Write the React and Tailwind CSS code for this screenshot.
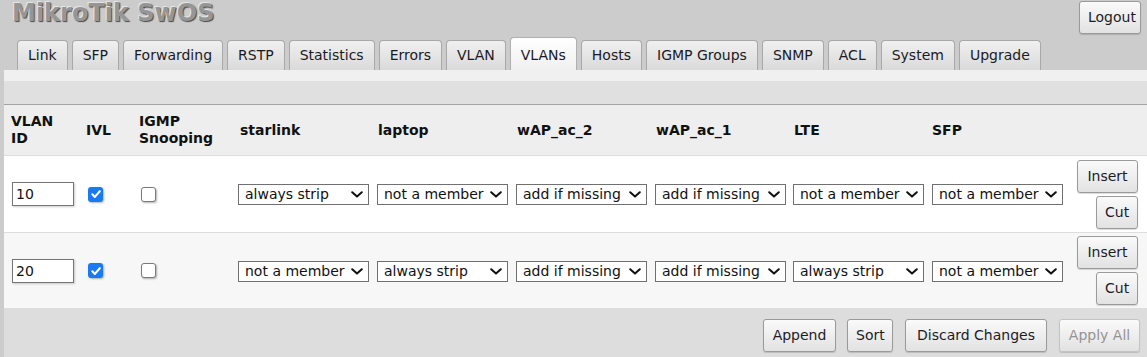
import React from "react";

const ports = ["starlink", "laptop", "wAP_ac_2", "wAP_ac_1", "LTE", "SFP"];
const rows = [
  { id: "10", ivl: true, igmp: false, vals: ["always strip", "not a member", "add if missing", "add if missing", "not a member", "not a member"], bg: "bg-white", border: "border-b border-[#dddddd]", h: "h-[77px]" },
  { id: "20", ivl: true, igmp: false, vals: ["not a member", "always strip", "add if missing", "add if missing", "always strip", "not a member"], bg: "bg-[#f7f7f7]", border: "", h: "h-[75px]" },
];
const tabs = ["Link", "SFP", "Forwarding", "RSTP", "Statistics", "Errors", "VLAN", "VLANs", "Hosts", "IGMP Groups", "SNMP", "ACL", "System", "Upgrade"];
const grid = "grid grid-cols-[75px_53px_101px_139px_139px_139px_138px_139px_139px_1fr]";

function Btn({ children, disabled, className = "" }) {
  return (
    <button
      className={`h-[33px] px-[8px] rounded-[3px] border text-[14px] bg-gradient-to-b from-[#fafafa] to-[#e2e2e2] shadow-[0_1px_1px_rgba(0,0,0,0.15)] ${disabled ? "border-[#c4c4c4] text-[#949494]" : "border-[#9a9a9a] text-[#1c1c28]"} ${className}`}
    >
      {children}
    </button>
  );
}

function Check({ on }) {
  return on ? (
    <div className="w-[15px] h-[15px] rounded-[3px] bg-[#1a78f2] shadow-[1px_1px_2px_rgba(0,0,0,0.3)] flex items-center justify-center">
      <svg width="12" height="12" viewBox="0 0 12 12">
        <path d="M2.3 6.3 L4.9 8.9 L9.8 3.2" fill="none" stroke="white" strokeWidth="2.1" strokeLinecap="round" strokeLinejoin="round" />
      </svg>
    </div>
  ) : (
    <div className="w-[15px] h-[15px] rounded-[3px] bg-white border border-[#7a7a7a] shadow-[1px_1px_2px_rgba(0,0,0,0.3)]" />
  );
}

function Sel({ value }) {
  return (
    <div className="relative w-[131px] h-[21px]">
      <select
        defaultValue={value}
        className="appearance-none w-full h-full border border-[#707070] bg-white text-[14px] leading-[19px] pl-[6px] pr-[20px] text-[#111] outline-none rounded-none"
      >
        <option>always strip</option>
        <option>not a member</option>
        <option>add if missing</option>
      </select>
      <svg className="absolute right-[6px] top-[7px] pointer-events-none" width="12" height="7" viewBox="0 0 12 7">
        <path d="M1.2 1.2 L6 5.6 L10.8 1.2" fill="none" stroke="#111" strokeWidth="2" strokeLinecap="round" strokeLinejoin="round" />
      </svg>
    </div>
  );
}

export default function App() {
  return (
    <div className="w-[1147px] h-[357px] bg-[#cccccc] overflow-hidden font-['DejaVu_Sans',sans-serif] text-[14px] text-[#111]">
      <div className="flex justify-between h-[37px]">
        <div className="pl-[12px] mt-[-1px] h-[28px] text-[24px] leading-[28px] font-bold text-[#969696] [text-shadow:-1px_-1px_0_#e6e6e6,1px_1px_1px_#4a4a4a]">
          MikroTik SwOS
        </div>
        <Btn className="mt-[1px] mr-[6px] h-[32px] w-[62px] px-0">Logout</Btn>
      </div>
      <div className="flex items-end gap-[4px] pl-[17px] h-[33px]">
        {tabs.map((t) => {
          const active = t === "VLANs";
          return (
            <div
              key={t}
              className={`flex items-center px-[10px] border border-b-0 rounded-t-[4px] text-[14px] text-[#1a1a24] ${
                active
                  ? "h-[33px] pt-[3px] border-[#b0b0b0] bg-gradient-to-b from-[#ffffff] to-[#f0f0f0]"
                  : "h-[30px] border-[#a8a8a8] bg-gradient-to-b from-[#f0f0f0] to-[#dadada]"
              }`}
            >
              {t}
            </div>
          );
        })}
      </div>
      <div className="ml-[4px]">
        <div className="h-[11px] bg-[#f0f0f0]" />
        <div className="h-[24px] bg-[#e0e0e0] border-b border-[#a4a4a4]" />
        <div className={`${grid} h-[51px] bg-[#eeeeee] border-b border-[#dddddd] items-center font-bold leading-[17px] text-[#111]`}>
          <div className="pl-[7px]">VLAN<br />ID</div>
          <div className="pl-[7px]">IVL</div>
          <div className="pl-[7px]">IGMP<br />Snooping</div>
          {ports.map((p, i) => (
            <div key={p} className={i === 0 ? "pl-[7px]" : i === 5 ? "pl-[5px]" : "pl-[6px]"}>{p}</div>
          ))}
          <div />
        </div>
        {rows.map((r) => (
          <div key={r.id} className={`${grid} ${r.h} ${r.bg} ${r.border} items-center`}>
            <div className="pl-[8px]">
              <input
                defaultValue={r.id}
                className="w-[62px] h-[24px] border border-[#767676] bg-white pl-[3px] text-[14px] text-[#111] outline-none shadow-[1px_1px_2px_rgba(0,0,0,0.2)]"
              />
            </div>
            <div className="pl-[9px]"><Check on={r.ivl} /></div>
            <div className="pl-[9px]"><Check on={r.igmp} /></div>
            {r.vals.map((v, i) => (
              <div key={i} className="pl-[5px] pt-[1px]"><Sel value={v} /></div>
            ))}
            <div className="flex flex-col items-end gap-[3px] pr-[9px]">
              <Btn className="h-[32px] w-[61px] px-0">Insert</Btn>
              <Btn className="h-[32px] w-[42px] px-0">Cut</Btn>
            </div>
          </div>
        ))}
        <div className="h-[60px] bg-[#dddddd] flex justify-end items-start pt-[11px] pr-[7px] gap-[12px]">
          <Btn className="w-[73px] px-0 mr-[-1px]">Append</Btn>
          <Btn className="w-[46px] px-0">Sort</Btn>
          <Btn className="w-[142px] px-0">Discard Changes</Btn>
          <Btn disabled className="w-[81px] px-0">Apply All</Btn>
        </div>
      </div>
    </div>
  );
}
